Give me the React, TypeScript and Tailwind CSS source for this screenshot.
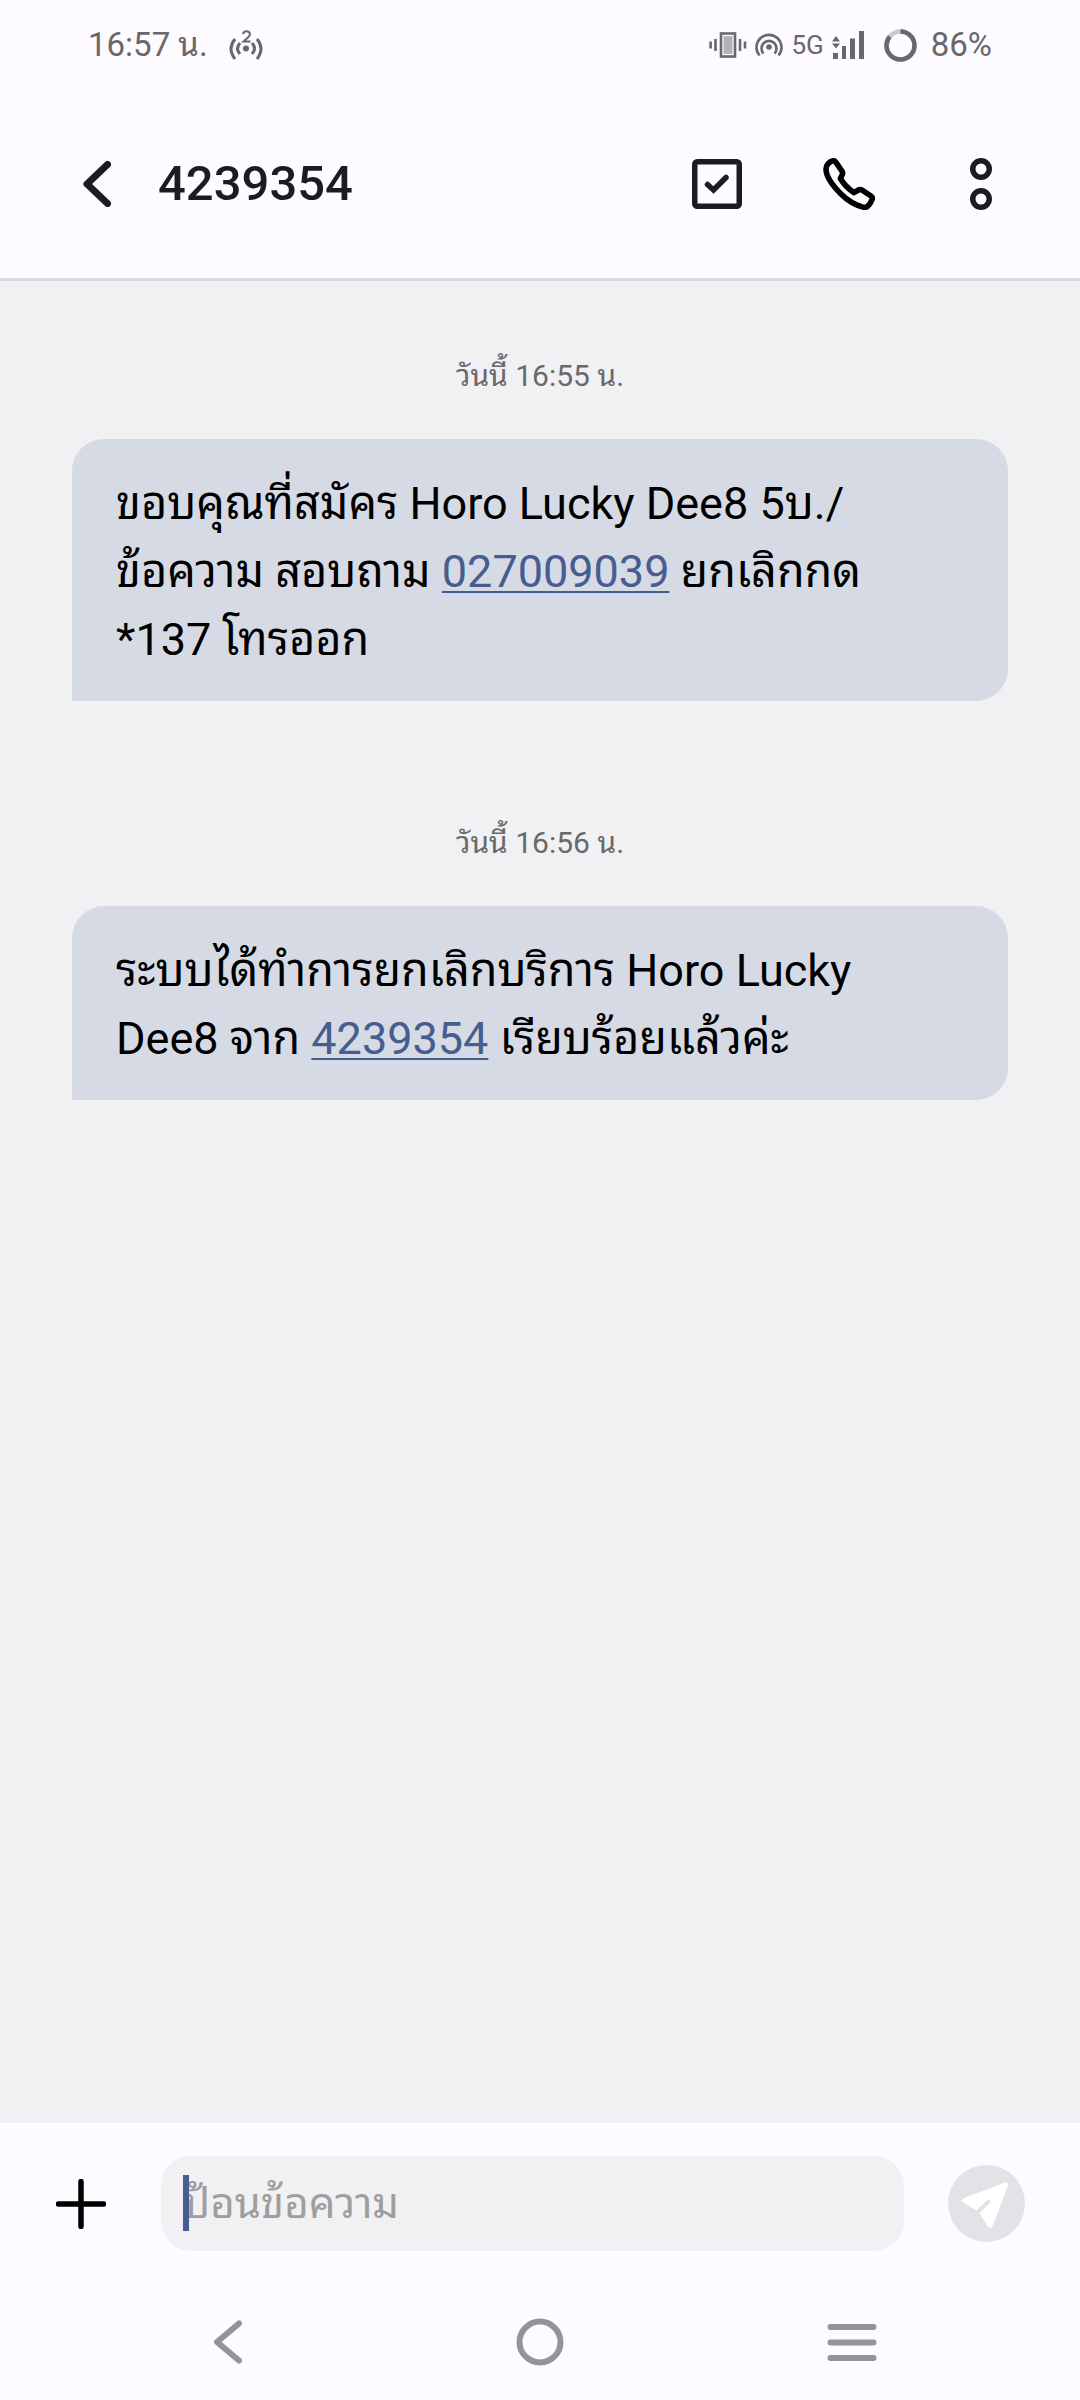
import type { ReactNode } from 'react';

function HotspotIcon() {
  return (
    <svg width="36" height="34" viewBox="0 0 36 34" fill="none" stroke="currentColor" strokeWidth={3}>
      <circle cx="18" cy="20.500" r="3" fill="currentColor" stroke="none" />
      <path d="M12 15q-5 5.500 0 11M7 11q-8 9.500 0 20" />
      <path d="M24 15q5 5.500 0 11M29 11q8 9.500 0 20" />
      <path d="M15 6q.5-2.800 3.500-2.800t3.500 2.800q0 1.700-1.800 3.200L15.500 13.500h7" strokeWidth={2} />
    </svg>
  );
}

function VibrateIcon() {
  return (
    <svg width="38" height="26" viewBox="0 0 38 26" fill="none" stroke="currentColor" strokeWidth={2.6}>
      <rect x="12" y="1.500" width="14" height="23" />
      <rect x="14.500" y="4" width="9" height="18" fill="currentColor" fillOpacity={0.5} stroke="none" />
      <path d="M6.500 7v12M31 7v12M1.600 9.500v7M36 9.500v7" />
    </svg>
  );
}

function CastIcon() {
  return (
    <svg width="28" height="24" viewBox="0 0 28 24" fill="none" stroke="currentColor" strokeWidth={2.6}>
      <circle cx="14" cy="14" r="2.800" fill="currentColor" stroke="none" />
      <path d="M4.500 22.500A12.500 12.500 0 1 1 23.500 22.500" />
      <path d="M8.500 20.500A7.500 7.500 0 1 1 19.500 20.500" />
    </svg>
  );
}

function SignalIcon() {
  return (
    <svg width="32" height="28" viewBox="0 0 32 28" fill="currentColor">
      <path d="M0 10.500 4 5l4 5.500zM0 12.500h8L4 17.500z" />
      <rect x="1" y="22" width="5" height="6" />
      <rect x="10" y="15" width="4" height="13" />
      <rect x="18" y="7.500" width="5" height="20.500" />
      <rect x="27" y="0" width="5" height="28" />
    </svg>
  );
}

function BatteryRing() {
  return (
    <svg width="33" height="33" viewBox="0 0 33 33" fill="none" stroke="currentColor" strokeWidth={4.5}>
      <circle cx="16.500" cy="16.500" r="14" strokeOpacity={0.35} />
      <circle
        cx="16.500"
        cy="16.500"
        r="14"
        pathLength={100}
        strokeDasharray="86 14"
        transform="rotate(-90 16.500 16.500)"
      />
    </svg>
  );
}

function BackIcon() {
  return (
    <svg width="28" height="46" viewBox="0 0 28 46" fill="none" stroke="currentColor" strokeWidth={7} strokeLinecap="round" strokeLinejoin="round">
      <path d="M24.500 3.500 4 23l20.500 19.500" />
    </svg>
  );
}

function SelectIcon() {
  return (
    <svg width="50" height="50" viewBox="0 0 50 50" fill="none" stroke="currentColor" strokeWidth={5.5}>
      <rect x="2.750" y="2.750" width="44.500" height="44.500" rx="2.500" />
      <path d="m15.500 25.500 6 5.500L34 18.500" strokeLinecap="round" />
    </svg>
  );
}

function PhoneIcon() {
  return (
    <svg width="52" height="52" viewBox="0 0 52 52" fill="none" stroke="#000" strokeWidth={5.6} strokeLinejoin="round">
      <path d="M3 11C3 7 6.500 3.500 10 2.800c1.300-.2 2.300.5 3 1.500l6.200 9.200c.6 1 .6 2 .1 3L17.400 20.500C21 26.500 25.500 31 31 34.700l4.500-2.700c1.200-.7 2.500-.6 3.600.1l8.900 5.900c1.200.8 1.600 2 1.100 3.400-.9 2.600-2.500 5.100-4.600 7-1.300 1.100-3 1.100-4.600.7C32 47 24.500 42.500 18 36 10 28 3 18 3 11z" />
    </svg>
  );
}

function MoreIcon() {
  return (
    <svg width="22" height="52" viewBox="0 0 22 52" fill="none" stroke="currentColor" strokeWidth={5.5}>
      <circle cx="11" cy="11" r="8.250" />
      <circle cx="11" cy="41" r="8.250" />
    </svg>
  );
}

function SendIcon() {
  return (
    <svg width="77" height="77" viewBox="0 0 77 77">
      <path
        d="M16 33 57 17.500q3.500-.5 3 3L44.500 61.500q-2.200 2.500-4.500 0L31.500 48 43 37q-1-2.500-3-2.500L28.500 45.500 14.500 37q-1.500-2.500 1.500-4z"
        fill="#fff"
      />
    </svg>
  );
}

function IconButton({ label, children }: { label: string; children: ReactNode }) {
  return (
    <button type="button" aria-label={label} className="flex size-[88px] shrink-0 items-center justify-center">
      {children}
    </button>
  );
}

function PhoneLink({ number }: { number: string }) {
  return (
    <a href={`tel:${number}`} className="text-[#475d90] underline decoration-2 underline-offset-4">
      {number}
    </a>
  );
}

function Message({ time, children }: { time: string; children: ReactNode }) {
  return (
    <section className="flex flex-col gap-[42px]">
      <time className="text-center text-[30px] leading-[42px] text-[#69696b]">{time}</time>
      <div className="rounded-[32px] rounded-bl-none bg-[#d6dae5] px-11 pt-[31px] pb-[27px] text-[45px] leading-[68px] text-black">
        {children}
      </div>
    </section>
  );
}

export default function App() {
  return (
    <div className="flex min-h-screen flex-col bg-[#fdfbff] font-['Roboto','Noto_Sans_Thai_Looped','Noto_Sans',sans-serif]">
      <div className="flex h-[90px] items-center justify-between px-[88px] text-[33px] text-[#69676b]">
        <div className="flex items-center gap-5">
          <span>16:57 น.</span>
          <HotspotIcon />
        </div>
        <div className="flex items-center gap-2">
          <VibrateIcon />
          <CastIcon />
          <span className="text-[26px]">5G</span>
          <SignalIcon />
          <span className="flex items-center gap-[14px] pl-3">
            <BatteryRing />
            86%
          </span>
        </div>
      </div>

      <header className="flex h-[191px] items-center border-b-[3px] border-[#dadadc] pr-[55px] pl-[53px] text-[#1a1c20]">
        <IconButton label="กลับ">
          <BackIcon />
        </IconButton>
        <h1 className="flex-1 pl-[17px] text-[49px] font-medium">4239354</h1>
        <div className="flex gap-11">
          <IconButton label="เลือก">
            <SelectIcon />
          </IconButton>
          <IconButton label="โทร">
            <PhoneIcon />
          </IconButton>
          <IconButton label="เพิ่มเติม">
            <MoreIcon />
          </IconButton>
        </div>
      </header>

      <main className="flex flex-1 flex-col gap-[121px] bg-[#f1f1f4] px-[72px] pt-[74px]">
        <Message time="วันนี้ 16:55 น.">
          <p>ขอบคุณที่สมัคร Horo Lucky Dee8 5บ./</p>
          <p>
            ข้อความ สอบถาม <PhoneLink number="027009039" /> ยกเลิกกด
          </p>
          <p>*137 โทรออก</p>
        </Message>
        <Message time="วันนี้ 16:56 น.">
          <p>ระบบได้ทำการยกเลิกบริการ Horo Lucky</p>
          <p>
            Dee8 จาก <PhoneLink number="4239354" /> เรียบร้อยแล้วค่ะ
          </p>
        </Message>
      </main>

      <form className="flex h-[161px] items-center pr-[55px] pl-[37px]">
        <IconButton label="แนบไฟล์">
          <svg width="50" height="50" viewBox="0 0 50 50" stroke="#000" strokeWidth={5.5} strokeLinecap="round">
            <path d="M25 2.500v45M2.500 25h45" />
          </svg>
        </IconButton>
        <div className="relative ml-9 h-[95px] flex-1">
          <input
            type="text"
            aria-label="ป้อนข้อความ"
            placeholder="ป้อนข้อความ"
            className="h-full w-full rounded-[30px] bg-[#f1f1f4] px-[22px] text-[42px] outline-none placeholder:text-[#9e9e9e]"
          />
          <span aria-hidden className="absolute top-[19px] left-[22px] h-14 w-[6px] bg-[#475d90]" />
        </div>
        <button
          type="submit"
          aria-label="ส่ง"
          className="ml-11 size-[77px] shrink-0 overflow-hidden rounded-full bg-[#e4e2e6]"
        >
          <SendIcon />
        </button>
      </form>

      <nav className="grid h-[116px] grid-cols-3 px-[72px] text-[#959397]">
        <button type="button" aria-label="ย้อนกลับ" className="flex items-center justify-center">
          <svg width="30" height="44" viewBox="0 0 30 44" fill="none" stroke="currentColor" strokeWidth={6} strokeLinecap="round" strokeLinejoin="round">
            <path d="M26 3.500 4 22l22 18.500" />
          </svg>
        </button>
        <button type="button" aria-label="หน้าหลัก" className="flex items-center justify-center">
          <svg width="48" height="48" viewBox="0 0 48 48" fill="none" stroke="currentColor" strokeWidth={6}>
            <circle cx="24" cy="24" r="20.500" />
          </svg>
        </button>
        <button type="button" aria-label="แอปล่าสุด" className="flex items-center justify-center">
          <svg width="50" height="38" viewBox="0 0 50 38" stroke="currentColor" strokeWidth={6} strokeLinecap="round">
            <path d="M3.500 4h43M3.500 19.500h43M3.500 35h43" />
          </svg>
        </button>
      </nav>
    </div>
  );
}
